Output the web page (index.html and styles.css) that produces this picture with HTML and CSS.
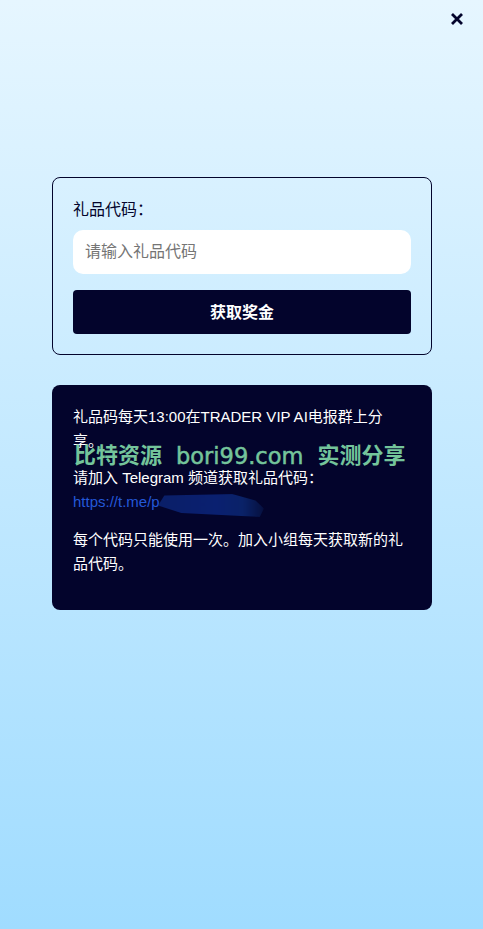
FILE: index.html
```html
<!DOCTYPE html>
<html lang="zh">
<head>
<meta charset="utf-8">
<title>礼品代码</title>
<link rel="stylesheet" href="styles.css">
</head>
<body>
<div class="page">
  <button class="close" aria-label="关闭">
    <svg viewBox="0 0 14 14" width="14" height="14"><path d="M2 2 L12 12 M12 2 L2 12" stroke="#03042c" stroke-width="2.8" fill="none"/></svg>
  </button>
  <section class="form-card">
    <label class="label">礼品代码：</label>
    <input class="input" type="text" placeholder="请输入礼品代码">
    <button class="submit"><span class="submit-text">获取奖金</span></button>
  </section>
  <section class="info-card">
    <p class="para">礼品码每天13:00在TRADER VIP AI电报群上分享。</p>
    <p class="para join">请加入 Telegram 频道获取礼品代码：<br><a class="link">https://t.me/p</a></p>
    <p class="para last">每个代码只能使用一次。加入小组每天获取新的礼品代码。</p>
    <div class="smear"></div>
    <div class="watermark">
      <span class="wm-cjk">比特资源</span>
      <span class="wm-latin">bori99.com</span>
      <span class="wm-cjk">实测分享</span>
    </div>
  </section>
</div>
</body>
</html>
```
FILE: styles.css
```css
* { box-sizing: border-box; }
html, body { margin: 0; padding: 0; }
body {
  font-family: "Liberation Sans", "Noto Sans CJK SC", sans-serif;
  color: #03042c;
}
.page {
  position: relative;
  width: 483px;
  height: 929px;
  padding: 177px 51px 0 52px;
  background: linear-gradient(180deg, #e6f6ff 0%, #a0dcff 100%);
}
.close {
  position: absolute;
  top: 12px;
  right: 19px;
  width: 14px;
  height: 14px;
  padding: 0;
  border: 0;
  background: none;
  display: flex;
}
.form-card {
  display: flex;
  flex-direction: column;
  height: 178px;
  padding: 20px;
  border: 1px solid #03042c;
  border-radius: 8px;
}
.label {
  font-size: 16px;
  line-height: 24px;
  margin-bottom: 8px;
}
.input {
  height: 44px;
  padding: 0 12px;
  border: 0;
  border-radius: 10px;
  background: #fff;
  font: 16px "Liberation Sans", "Noto Sans CJK SC", sans-serif;
  margin-bottom: 16px;
}
.input::placeholder { color: #757575; opacity: 1; }
.submit {
  height: 44px;
  padding: 0 0 3px;
  border: 0;
  border-radius: 4px;
  background: #03042c;
  color: #fff;
  font: bold 16px "Liberation Sans", "Noto Sans CJK SC", sans-serif;
}
.info-card {
  position: relative;
  height: 225px;
  margin-top: 30px;
  padding: 20px 20px 0 21px;
  border-radius: 8px;
  background: #03042c;
  color: #fff;
  font-size: 15px;
  line-height: 24px;
}
.para { margin: 0 0 13px; }
.join { line-height: 24px; }
.last { margin: 14px 0 0; line-height: 24px; }
.link { color: #2358d8; }
.smear {
  position: absolute;
  left: 106px;
  top: 108px;
  width: 106px;
  height: 25px;
  background: linear-gradient(90deg, #0a1f68 0%, #0a2070 55%, #0a2268 80%, #06103f 100%);
  clip-path: polygon(6% 10%, 70% 4%, 92% 30%, 100% 62%, 96% 96%, 22% 80%, 0 50%);
  filter: blur(1px);
}
.watermark {
  position: absolute;
  left: 22px;
  top: 57px;
  display: flex;
  align-items: center;
  gap: 14px;
  height: 28px;
  white-space: nowrap;
  color: #74c49b;
  font-family: "DejaVu Sans", "Noto Sans CJK SC", sans-serif;
}
.wm-cjk {
  font-size: 22px;
  font-weight: bold;
  line-height: 28px;
}
.wm-latin {
  font-size: 22.5px;
  line-height: 28px;
  -webkit-text-stroke: 0.5px #74c49b;
}
```
